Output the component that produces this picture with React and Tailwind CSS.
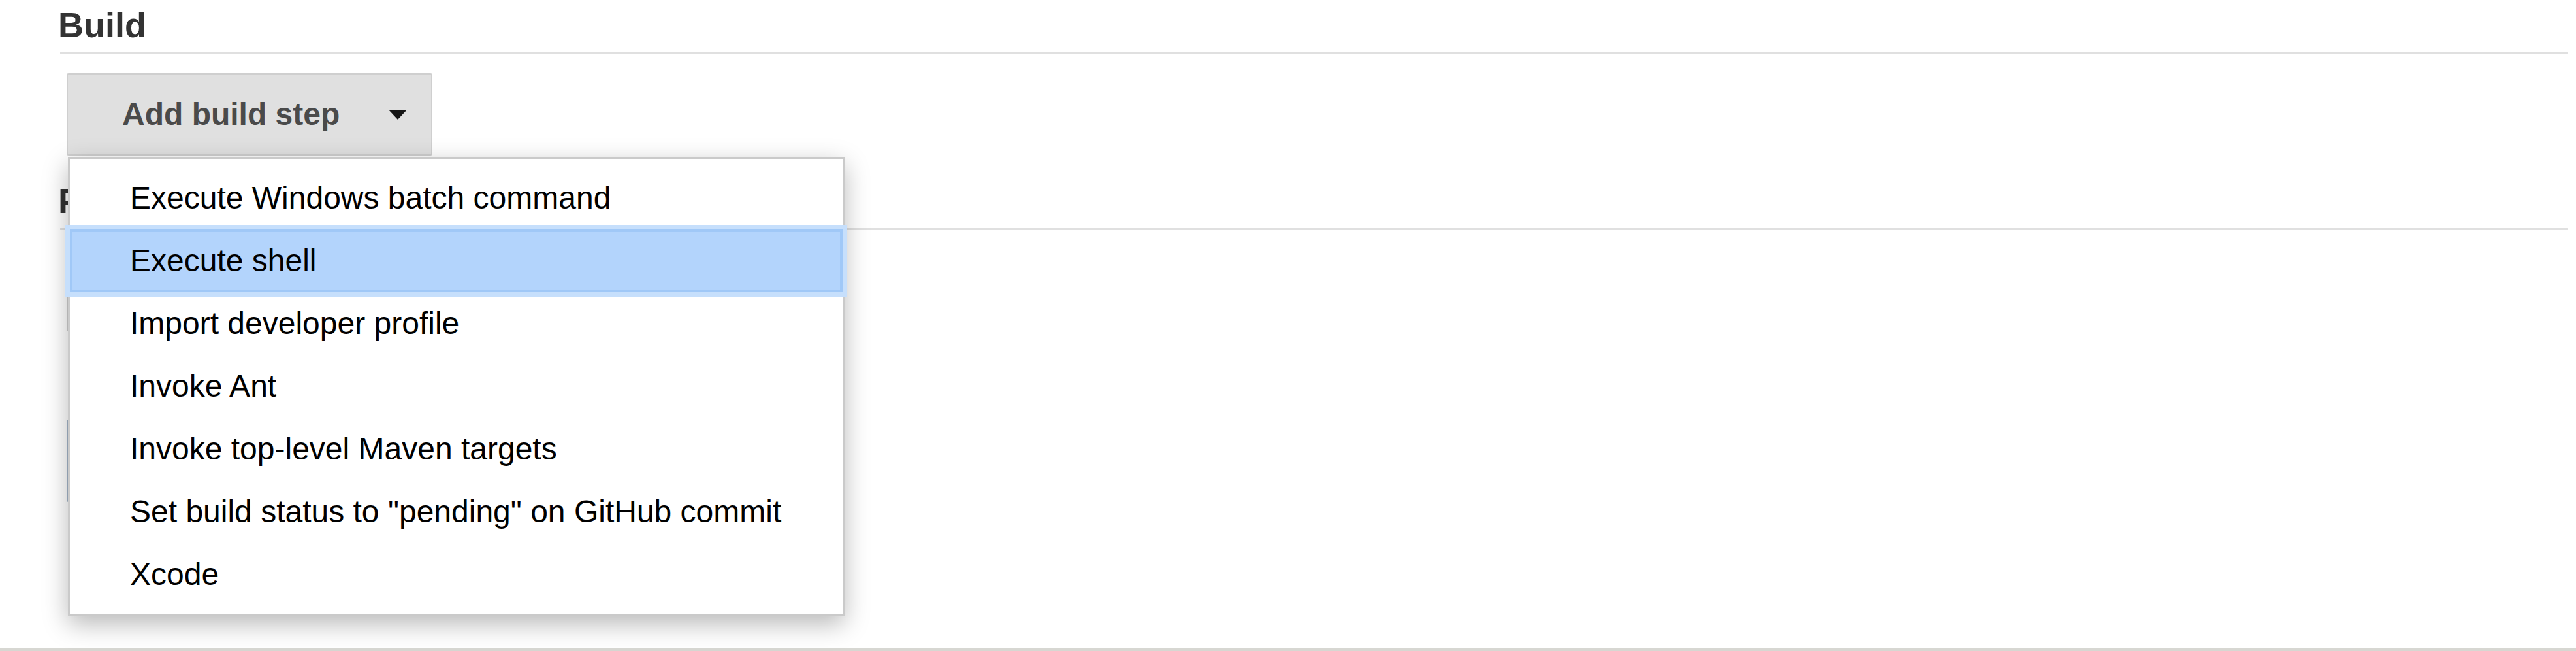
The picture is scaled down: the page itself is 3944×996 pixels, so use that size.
const buildSteps = [
  'Execute Windows batch command',
  'Execute shell',
  'Import developer profile',
  'Invoke Ant',
  'Invoke top-level Maven targets',
  'Set build status to "pending" on GitHub commit',
  'Xcode',
]

function SectionHeading({ children }) {
  return (
    <h2 className="pt-[11px] pb-[15px] border-b-[3px] border-[#e0e0e0] text-[54px] leading-[54px] font-bold text-[#333] -indent-[3px]">
      {children}
    </h2>
  )
}

function StepMenu({ active }) {
  return (
    <div className="absolute left-[2px] top-[128px] z-10 w-[1189px] bg-white border-[3px] border-[#cacaca] pt-[12px] pb-[13px] shadow-[0_12px_36px_rgba(0,0,0,0.28)]">
      {buildSteps.map((step, i) => (
        <div
          key={step}
          className={`h-[96px] flex items-center pl-[92px] text-[48px] text-black whitespace-nowrap ${
            i === active
              ? 'relative bg-[#b3d4fc] shadow-[inset_0_0_0_4px_#a0c8f7,0_0_0_7px_#c6dffc]'
              : ''
          }`}
        >
          {step}
        </div>
      ))}
    </div>
  )
}

export default function App() {
  return (
    <div className="h-[996px] w-full bg-white flex flex-col font-['Liberation_Sans',Arial,sans-serif]">
      <div className="pl-[92px] pr-[12px]">
        <section>
          <SectionHeading>Build</SectionHeading>
          <div className="relative mt-[29px] ml-[10px] w-[560px]">
            <button className="h-[126px] w-[560px] flex items-center border-2 border-[#cfcfcf] bg-[#e0e0e0] rounded-[3px] pl-[83px] pr-[37px] text-[48px] leading-none font-bold text-[#4a4a4a]">
              <span>Add build step</span>
              <svg className="ml-auto w-[28px] h-[15px]" viewBox="0 0 28 15">
                <path d="M0 0h28L14 15z" fill="#161616" />
              </svg>
            </button>
            <StepMenu active={1} />
          </div>
        </section>

        <section className="mt-[31px]">
          <SectionHeading>Post-build Actions</SectionHeading>
          <div className="mt-[29px] ml-[10px] h-[126px] w-[560px] border-2 border-[#cfcfcf] bg-[#e0e0e0] rounded-[3px]" />
          <div className="mt-[135px] ml-[10px] h-[126px] w-[260px] border-2 border-[#a4b6c9] bg-[#4b758b] rounded-[3px]" />
        </section>
      </div>
      <div className="mt-auto h-[4px] bg-[#d7d7d2]" />
    </div>
  )
}
